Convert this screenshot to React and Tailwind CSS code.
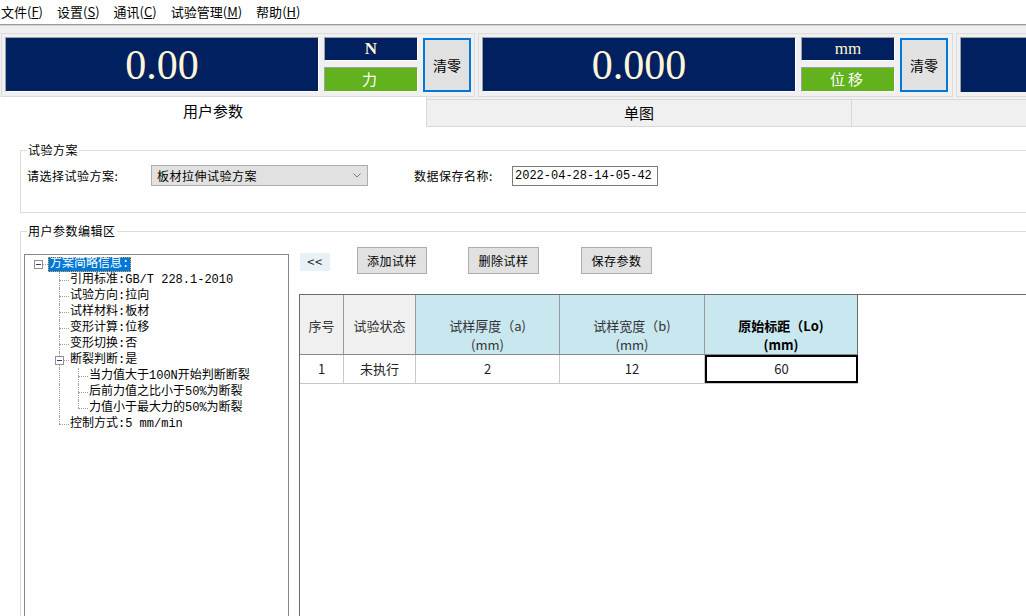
import React from "react";

const ui = { fontFamily: '"Noto Sans CJK SC", "Noto Sans", sans-serif' };
const song = { fontFamily: '"Liberation Mono", "Noto Sans CJK SC", monospace' };
const serif = { fontFamily: '"Liberation Serif", "Times New Roman", serif' };

const MenuItem = ({ label, k }) => (
  <span className="whitespace-nowrap">
    {label}(<span className="underline">{k}</span>)
  </span>
);

const ExpandBox = ({ className = "" }) => (
  <span className={`w-[9px] h-[9px] border border-[#919191] bg-white flex items-center justify-center ${className}`}>
    <span className="w-[5px] h-[1px] bg-[#1c3f8c]" />
  </span>
);

// one indent column of the tree: dotted vertical / horizontal connectors
const Guide = ({ v, h, half, box }) => (
  <span className="relative w-[19px] h-[16px] shrink-0">
    {v && (
      <span
        className={`absolute left-[9px] top-0 border-l border-dotted border-[#a0a0a0] ${half ? "h-[8px]" : "h-[16px]"}`}
      />
    )}
    {h && <span className="absolute left-[9px] top-[8px] w-[10px] border-t border-dotted border-[#a0a0a0]" />}
    {box && <ExpandBox className="absolute left-[5px] top-[4px]" />}
  </span>
);

const Row = ({ children }) => <div className="flex items-center h-[16px] whitespace-nowrap">{children}</div>;

const Display = ({ value, unit, unitBold, name, width }) => (
  <div className={`${width} h-[64px] border border-[#dcdcdc] p-[3px] flex items-start shrink-0`}>
    <div
      className="w-[314px] h-[55px] bg-[#00205f] border-t border-l border-[#a0a0a0] border-b border-r border-b-white border-r-white flex items-center justify-center text-[42px] leading-none text-[#fff6d8] shrink-0"
      style={serif}
    >
      {value}
    </div>
    <div className="ml-[5px] w-[94px] flex flex-col gap-[6px] shrink-0">
      <div
        className={`h-[24px] bg-[#00205f] border-t border-l border-[#a0a0a0] border-b border-r border-b-white border-r-white flex items-center justify-center text-[17px] text-[#fff6d8] ${unitBold ? "font-bold" : ""}`}
        style={serif}
      >
        {unit}
      </div>
      <div className="h-[25px] bg-[#62b21d] border-t border-l border-[#a0a0a0] border-b border-r border-b-white border-r-white flex items-center justify-center text-[15px] tracking-[3px] text-white">
        {name}
      </div>
    </div>
    <button className="ml-[5px] mt-[1px] w-[48px] h-[54px] border-2 border-[#0078d7] bg-[#e1e1e1] text-[14px] text-black shrink-0">
      清零
    </button>
  </div>
);

const HeadCell = ({ w, blue, bold, last, children }) => (
  <div
    className={`${w} h-full shrink-0 border-r ${last ? "border-[#6b6b6b]" : "border-[#9a9a9a]"} ${blue ? "bg-[#c9e7ef]" : "bg-[#f0f0f0]"} ${bold ? "font-bold text-black" : "text-[#333]"} pt-[21px] leading-[19px] text-center text-[13px]`}
  >
    {children}
  </div>
);

const Cell = ({ w, sel, children }) => (
  <div
    className={`${w} h-full shrink-0 flex items-center justify-center text-[13px] text-[#222] ${sel ? "border-2 border-black" : "border-r border-[#c8c8c8]"}`}
  >
    {children}
  </div>
);

export default function App() {
  return (
    <div className="w-[1026px] h-[616px] overflow-hidden bg-white flex flex-col text-black" style={ui}>
      {/* menu */}
      <div className="h-[24px] bg-white flex items-center pl-[1px] gap-[14px] text-[13px] shrink-0">
        <MenuItem label="文件" k="F" />
        <MenuItem label="设置" k="S" />
        <MenuItem label="通讯" k="C" />
        <MenuItem label="试验管理" k="M" />
        <MenuItem label="帮助" k="H" />
      </div>
      <div className="h-[2px] border-t border-[#9c9c9c] border-b border-b-[#d4d4d4] shrink-0" />

      {/* displays */}
      <div className="bg-[#f0f0f0] pt-[7px] pl-[1px] flex gap-[3px] shrink-0">
        <Display value="0.00" unit="N" unitBold name="力" width="w-[474px]" />
        <Display value="0.000" unit="mm" name="位移" width="w-[475px]" />
        <div className="w-[200px] h-[64px] border border-[#dcdcdc] p-[3px] shrink-0">
          <div className="w-[200px] h-[55px] bg-[#00205f] border-t border-l border-[#a0a0a0]" />
        </div>
      </div>

      {/* tabs */}
      <div className="h-[30px] bg-[#f0f0f0] flex shrink-0">
        <div className="w-[427px] h-full bg-white border-r border-[#d9d9d9] flex items-center justify-center text-[15px] pb-[2px]">
          用户参数
        </div>
        <div className="w-[425px] mt-[2px] h-[28px] border-t border-b border-r border-[#d9d9d9] flex items-center justify-center text-[15px]">
          单图
        </div>
        <div className="flex-1 mt-[2px] h-[28px] border-t border-b border-[#d9d9d9]" />
      </div>

      {/* content */}
      <div className="flex-1 bg-white text-[12px]">
        <fieldset className="ml-[20px] mt-[15px] w-[1020px] h-[71px] border border-[#dcdcdc] pl-[6px]">
          <legend className="px-[1px] leading-[16px] tracking-[0.5px]">试验方案</legend>
          <div className="mt-[7px] flex items-center h-[21px] tracking-[0.5px]">
            <span className="w-[124px] shrink-0">请选择试验方案:</span>
            <div className="w-[217px] h-[21px] bg-[#e1e1e1] border border-[#adadad] flex items-center pl-[5px] pr-[6px] shrink-0">
              <span className="flex-1">板材拉伸试验方案</span>
              <svg width="8" height="5" viewBox="0 0 8 5">
                <polyline points="0.5,0.5 4,4 7.5,0.5" fill="none" stroke="#7a7a7a" strokeWidth="1" />
              </svg>
            </div>
            <span className="ml-[46px] w-[98px] shrink-0">数据保存名称:</span>
            <div className="w-[146px] h-[20px] border border-[#7a7a7a] flex items-center pl-[2px] text-[12px] tracking-normal" style={song}>
              2022-04-28-14-05-42
            </div>
          </div>
        </fieldset>

        <fieldset className="ml-[20px] mt-[10px] w-[1020px] h-[420px] border border-[#dcdcdc]">
          <legend className="ml-[6px] px-[1px] leading-[16px] tracking-[0.5px]">用户参数编辑区</legend>
          <div className="flex items-start">
            {/* tree */}
            <div className="ml-[3px] mt-[15px] w-[265px] h-[400px] border border-[#828790] pt-[1px] shrink-0 text-[12px]" style={song}>
              <Row>
                <ExpandBox className="ml-[9px]" />
                <span className="w-[5px] border-t border-dotted border-[#a0a0a0]" />
                <span className="h-[15px] leading-[13px] bg-[#0078d7] text-white border border-dotted border-[#f0a030] px-[1px]">方案简略信息:</span>
              </Row>
              {["引用标准:GB/T 228.1-2010", "试验方向:拉向", "试样材料:板材", "变形计算:位移", "变形切换:否"].map((t) => (
                <Row key={t}>
                  <span className="w-[25px] shrink-0" />
                  <Guide v h />
                  <span className="ml-[1px]">{t}</span>
                </Row>
              ))}
              <Row>
                <span className="w-[25px] shrink-0" />
                <span className="relative w-[19px] h-[16px] shrink-0">
                  <span className="absolute left-[9px] top-0 h-[16px] border-l border-dotted border-[#a0a0a0]" />
                  <span className="absolute left-[13px] top-[8px] w-[6px] border-t border-dotted border-[#a0a0a0]" />
                  <ExpandBox className="absolute left-[5px] top-[4px]" />
                </span>
                <span className="ml-[1px]">断裂判断:是</span>
              </Row>
              {["当力值大于100N开始判断断裂", "后前力值之比小于50%为断裂", "力值小于最大力的50%为断裂"].map((t, i) => (
                <Row key={t}>
                  <span className="w-[25px] shrink-0" />
                  <Guide v />
                  <Guide v h half={i === 2} />
                  <span className="ml-[1px]">{t}</span>
                </Row>
              ))}
              <Row>
                <span className="w-[25px] shrink-0" />
                <Guide v h half />
                <span className="ml-[1px]">控制方式:5 mm/min</span>
              </Row>
            </div>

            {/* right side */}
            <div className="ml-[10px] mt-[8px] w-[740px] shrink-0">
              <div className="flex items-start h-[27px] tracking-[0.5px]">
                <button className="ml-[1px] mt-[6px] w-[30px] h-[18px] bg-[#e8f1f5] text-[13px] text-[#222] flex items-center justify-center" style={ui}>
                  &lt;&lt;
                </button>
                <button className="ml-[27px] w-[70px] h-[27px] bg-[#e1e1e1] border border-[#adadad] text-[12px]">添加试样</button>
                <button className="ml-[41px] w-[71px] h-[27px] bg-[#e1e1e1] border border-[#adadad] text-[12px]">删除试样</button>
                <button className="ml-[42px] w-[71px] h-[27px] bg-[#e1e1e1] border border-[#adadad] text-[12px]">保存参数</button>
              </div>
              <div className="mt-[20px] h-[400px] border-l border-t border-[#6b6b6b]">
                <div className="flex h-[60px] border-b border-[#8a8a8a] w-[558px]">
                  <HeadCell w="w-[44px]">序号</HeadCell>
                  <HeadCell w="w-[72px]">试验状态</HeadCell>
                  <HeadCell w="w-[144px]" blue>试样厚度（a)<br />(mm)</HeadCell>
                  <HeadCell w="w-[145px]" blue>试样宽度（b)<br />(mm)</HeadCell>
                  <HeadCell w="w-[153px]" blue bold last>原始标距（Lo)<br />(mm)</HeadCell>
                </div>
                <div className="flex h-[29px] border-b border-[#c8c8c8] w-[558px]">
                  <Cell w="w-[44px]">1</Cell>
                  <Cell w="w-[72px]">未执行</Cell>
                  <Cell w="w-[144px]">2</Cell>
                  <Cell w="w-[145px]">12</Cell>
                  <Cell w="w-[153px]" sel>60</Cell>
                </div>
              </div>
            </div>
          </div>
        </fieldset>
      </div>
    </div>
  );
}
